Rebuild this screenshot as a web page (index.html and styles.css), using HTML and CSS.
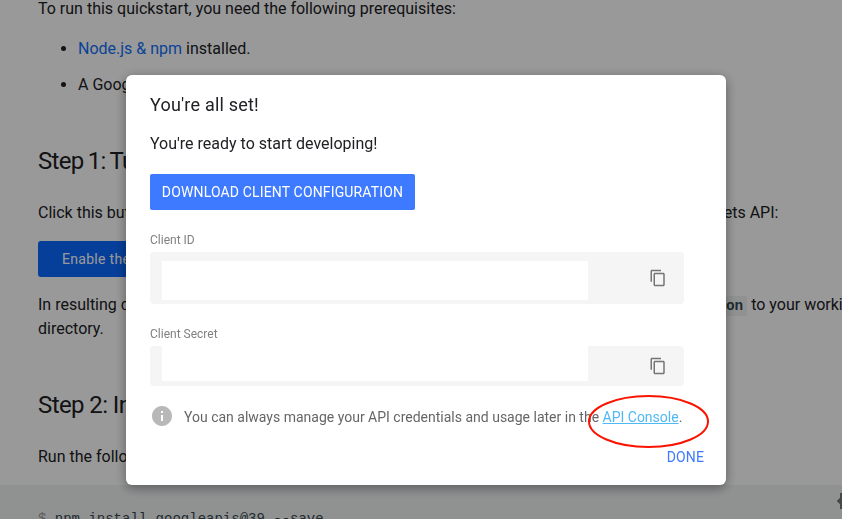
FILE: index.html
```html
<!DOCTYPE html>
<html lang="en">
<head>
    <meta charset="UTF-8">
    <meta name="viewport" content="width=device-width, initial-scale=1.0">
    <title>Node.js Quickstart</title>
    <link rel="stylesheet" href="styles.css">
</head>
<body>
    <main class="article">
        <p>To run this quickstart, you need the following prerequisites:</p>
        <ul>
            <li><a href="#">Node.js &amp; npm</a> installed.</li>
            <li>A Google account</li>
        </ul>

        <h2 class="first-step">Step 1: Turn on the Google Sheets API</h2>
        <p>Click this button to create a new Cloud Platform project and automatically enable the Google Sheets API:</p>
        <button class="btn-enable">Enable the Google Sheets API</button>
        <p class="result-text">In resulting dialog click <b>DOWNLOAD CLIENT CONFIGURATION</b> and save the file <code>credentials.json</code> to your working directory.</p>

        <h2>Step 2: Install the client library</h2>
        <p>Run the following commands to install the library using npm:</p>
        <div class="code-block">
            <pre><span class="prompt">$</span> npm install googleapis@39 --save</pre>
            <svg class="theme-icon" width="24" height="24" viewBox="0 0 24 24" fill="#777">
                <path d="M20 8.69V4h-4.69L12 .69 8.69 4H4v4.69L.69 12 4 15.31V20h4.69L12 23.31 15.31 20H20v-4.69L23.31 12z"/>
            </svg>
        </div>
    </main>

    <div class="overlay">
        <div class="dialog">
            <h3>You're all set!</h3>
            <p class="dialog-text">You're ready to start developing!</p>
            <button class="btn-download">DOWNLOAD CLIENT CONFIGURATION</button>

            <label class="field-label">Client ID</label>
            <div class="field field-id">
                <div class="field-value"></div>
                <svg class="copy-icon" width="18" height="18" viewBox="0 0 24 24" fill="#757575">
                    <path d="M16 1H4c-1.100 0-2 .9-2 2v14h2V3h12V1zm3 4H8c-1.100 0-2 .9-2 2v14c0 1.100.9 2 2 2h11c1.100 0 2-.9 2-2V7c0-1.100-.9-2-2-2zm0 16H8V7h11v14z"/>
                </svg>
            </div>

            <label class="field-label">Client Secret</label>
            <div class="field field-secret">
                <div class="field-value"></div>
                <svg class="copy-icon" width="18" height="18" viewBox="0 0 24 24" fill="#757575">
                    <path d="M16 1H4c-1.100 0-2 .9-2 2v14h2V3h12V1zm3 4H8c-1.100 0-2 .9-2 2v14c0 1.100.9 2 2 2h11c1.100 0 2-.9 2-2V7c0-1.100-.9-2-2-2zm0 16H8V7h11v14z"/>
                </svg>
            </div>

            <div class="info">
                <svg width="24" height="24" viewBox="0 0 24 24" fill="#b8b8b8">
                    <path d="M12 2C6.480 2 2 6.480 2 12s4.480 10 10 10 10-4.480 10-10S17.520 2 12 2zm1 15h-2v-6h2v6zm0-8h-2V7h2v2z"/>
                </svg>
                <span>You can always manage your API credentials and usage later in the <a href="#">API Console</a>.</span>
            </div>
            <button class="btn-done">DONE</button>

            <!-- Highlight around the console link -->
            <svg class="highlight" width="122" height="54" viewBox="0 0 122 54">
                <ellipse cx="60.500" cy="27.500" rx="59.500" ry="25.500" fill="none" stroke="#fa1400" stroke-width="2"/>
            </svg>
        </div>
    </div>
</body>
</html>
```

FILE: styles.css
```css
body {
    margin: 0;
    height: 519px;
    overflow: hidden;
    background-color: #fff;
    color: #202124;
    font-family: Roboto, sans-serif;
    font-size: 16px;
    line-height: 24px;
}

button {
    border: none;
    font-family: inherit;
    cursor: pointer;
}

.article {
    width: 850px;
    padding: 0 38px;
    margin-top: -3px;
}

.article p {
    margin: 0;
}

.article a {
    color: #1070fa;
    text-decoration: none;
}

.article ul {
    margin: 16px 0 0;
    padding-left: 40px;
}

.article li {
    margin-bottom: 12px;
}

.article h2 {
    margin: 48px 0 24px;
    font-size: 24px;
    font-weight: 400;
    line-height: 32px;
    letter-spacing: -0.6px;
}

.article .first-step {
    letter-spacing: -0.7px;
    word-spacing: -1px;
}

.btn-enable {
    display: block;
    height: 36px;
    margin: 16px 0;
    padding: 0 24px;
    border-radius: 3px;
    background-color: #0b69ff;
    color: #fff;
    font-size: 14px;
    letter-spacing: 0.3px;
}

.article code {
    padding: 2px 4px;
    background-color: #f1f3f4;
    color: #37474f;
    font-family: "Liberation Mono", monospace;
    font-size: 14.4px;
    font-weight: 700;
    line-height: 1;
}

.code-block {
    display: flex;
    height: 80px;
    margin: 16px -38px 0;
    padding: 0 38px;
    background-color: #f1f3f4;
}

.code-block pre {
    margin: 24px 0 0;
    color: #37474f;
    font-family: "Liberation Mono", monospace;
    font-size: 14px;
    line-height: 20px;
}

.prompt {
    color: #999;
}

.theme-icon {
    margin: 4px 0 0 512px;
}

.overlay {
    position: fixed;
    inset: 0;
    background-color: rgba(0, 0, 0, 0.4);
}

.dialog {
    position: relative;
    box-sizing: border-box;
    width: 600px;
    height: 410px;
    margin: 75px 0 0 126px;
    padding: 18px 24px;
    border-radius: 6px;
    background-color: #fff;
    box-shadow: 0 3px 12px rgba(0, 0, 0, 0.4);
}

.dialog h3 {
    margin: 0;
    font-size: 18px;
    font-weight: 400;
    letter-spacing: 0.2px;
}

.dialog-text {
    margin: 15px 0 18px;
}

.btn-download {
    display: block;
    width: 265px;
    height: 36px;
    padding: 0;
    border-radius: 2px;
    background-color: #3d7aff;
    color: #fff;
    font-size: 14px;
    letter-spacing: 0.15px;
}

.field-label {
    display: block;
    margin-top: 22px;
    color: #808080;
    font-size: 12px;
    line-height: 16px;
}

.field {
    display: flex;
    align-items: center;
    box-sizing: border-box;
    width: 534px;
    margin-top: 4px;
    padding: 0 17px 0 12px;
    border-radius: 4px;
    background-color: #f5f5f5;
}

.field-id {
    height: 52px;
}

.field-secret {
    height: 40px;
}

.field-value {
    width: 426px;
    height: 39px;
    margin-top: 5px;
    background-color: #fff;
}

.field-secret .field-value {
    height: 35px;
    margin: 0 0 5px;
}

.copy-icon {
    margin-left: auto;
}

.info {
    display: flex;
    align-items: center;
    gap: 10px;
    margin-top: 18px;
    color: #666;
    font-size: 14px;
}

.info span {
    padding-top: 2px;
    line-height: 22px;
}

.info a {
    color: #4fb9f5;
}

.btn-done {
    display: block;
    margin: 17px -2px 0 auto;
    padding: 0;
    background: none;
    color: #3d7aff;
    font-size: 14px;
    line-height: 24px;
    letter-spacing: 0.15px;
}

.highlight {
    position: absolute;
    left: 462px;
    top: 319px;
}
```
